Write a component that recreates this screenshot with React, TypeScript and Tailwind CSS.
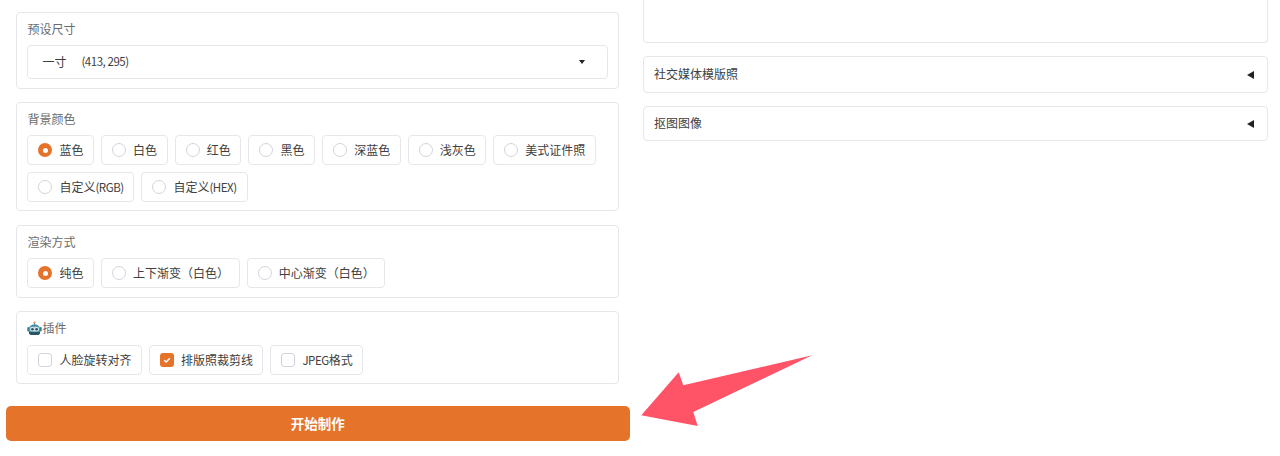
import React from "react";

function Robot() {
  return (
    <svg width="15" height="15" viewBox="0 0 15 15" className="shrink-0">
      <circle cx="7.5" cy="1.6" r="1.2" fill="#e8a33d" />
      <rect x="7" y="2" width="1" height="2" fill="#8a97a0" />
      <rect x="0.3" y="6" width="2" height="4.5" rx="1" fill="#2f7f97" />
      <rect x="12.7" y="6" width="2" height="4.5" rx="1" fill="#2f7f97" />
      <path d="M2 8c0-3 2.400-4.600 5.500-4.600S13 5 13 8v3.500c0 1.500-1 2.500-2.500 2.500h-6C3 14 2 13 2 11.500z" fill="#3d8ca6" />
      <path d="M2 11h11v.8c0 1.300-1 2.200-2.500 2.200h-6C3 14 2 13.100 2 11.800z" fill="#2b5566" />
      <rect x="2.800" y="5.800" width="9.400" height="4.800" rx="2" fill="#c9dfe6" />
      <circle cx="5.400" cy="8.200" r="1.300" fill="#35515f" />
      <circle cx="9.600" cy="8.200" r="1.300" fill="#35515f" />
    </svg>
  );
}

function Lat({ children }: { children: React.ReactNode }) {
  return <span className="text-[11.5px] tracking-[-0.45px]">{children}</span>;
}

function Radio({ label, checked, w }: { label: React.ReactNode; checked?: boolean; w: string }) {
  return (
    <div className={`h-[30px] ${w} flex items-center pl-[10px] gap-[7px] bg-white border border-[#e5e7eb] rounded-[4px] text-[12px] text-[#404040] whitespace-nowrap`}>
      {checked ? (
        <span className="w-[14px] h-[14px] rounded-full bg-[#e6732a] flex items-center justify-center shrink-0">
          <span className="w-[5px] h-[5px] rounded-full bg-white" />
        </span>
      ) : (
        <span className="w-[14px] h-[14px] rounded-full border border-[#d1d5db] shrink-0" />
      )}
      <span>{label}</span>
    </div>
  );
}

function Check({ label, checked, w }: { label: React.ReactNode; checked?: boolean; w: string }) {
  return (
    <div className={`h-[30px] ${w} flex items-center pl-[10px] gap-[7px] bg-white border border-[#e5e7eb] rounded-[4px] text-[12px] text-[#404040] whitespace-nowrap`}>
      {checked ? (
        <span className="w-[14px] h-[14px] rounded-[3px] bg-[#e6732a] flex items-center justify-center shrink-0">
          <svg width="10" height="10" viewBox="0 0 10 10" fill="none">
            <path d="M2.200 5.200 4.200 7 7.800 3.200" stroke="#fff" strokeWidth="1.500" />
          </svg>
        </span>
      ) : (
        <span className="w-[14px] h-[14px] rounded-[3px] border border-[#d1d5db] shrink-0" />
      )}
      <span>{label}</span>
    </div>
  );
}

function Panel({ label, h, gap, children }: { label: React.ReactNode; h: string; gap: string; children: React.ReactNode }) {
  return (
    <div className={`${h} ml-[10px] mr-[11px] border border-[#e5e7eb] rounded-[4px] bg-white pl-[10.4px] pr-[10px] pt-[7px]`}>
      <div className="h-[18px] leading-[18px] flex items-center text-[12px] text-[#6b6b6b]">{label}</div>
      <div className={gap}>{children}</div>
    </div>
  );
}

function Accordion({ label, h }: { label: string; h: string }) {
  return (
    <div className={`${h} border border-[#e5e7eb] rounded-[4px] bg-white flex items-center justify-between pl-[10px] pr-[13px] text-[12px] text-[#404040]`}>
      <span className="pb-[2px]">{label}</span>
      <span className="w-0 h-0 border-y-[4px] border-y-transparent border-r-[7px] border-r-[#222222]" />
    </div>
  );
}

export default function App() {
  return (
    <div className="relative h-[456px] w-[1280px] overflow-hidden bg-white flex font-['Noto_Sans_CJK_SC','Noto_Sans',sans-serif]">
      <div className="w-[623.5px] ml-[6px] pt-[12px] shrink-0">
        <Panel label="预设尺寸" h="h-[77px]" gap="mt-[7px]">
          <div className="h-[34px] border border-[#e5e7eb] rounded-[4px] flex items-center justify-between pl-[14px] pr-[22px] text-[#404040]">
            <span className="flex items-center text-[12px]">
              <span className="w-[39px]">一寸</span>
              <Lat>(413, 295)</Lat>
            </span>
            <span className="w-0 h-0 border-x-[3.5px] border-x-transparent border-t-[4px] border-t-[#222222]" />
          </div>
        </Panel>
        <div className="h-[13px]" />
        <Panel label="背景颜色" h="h-[109px]" gap="mt-[7px]">
          <div className="flex flex-wrap gap-[7px]">
            <Radio label="蓝色" checked w="w-[66.7px]" />
            <Radio label="白色" w="w-[66.7px]" />
            <Radio label="红色" w="w-[66.7px]" />
            <Radio label="黑色" w="w-[66.7px]" />
            <Radio label="深蓝色" w="w-[78.5px]" />
            <Radio label="浅灰色" w="w-[78.5px]" />
            <Radio label="美式证件照" w="w-[103px]" />
            <Radio label={<>自定义<Lat>(RGB)</Lat></>} w="w-[107px]" />
            <Radio label={<>自定义<Lat>(HEX)</Lat></>} w="w-[107px]" />
          </div>
        </Panel>
        <div className="h-[14px]" />
        <Panel label="渲染方式" h="h-[73px]" gap="mt-[7px]">
          <div className="flex gap-[7px]">
            <Radio label="纯色" checked w="w-[66.7px]" />
            <Radio label="上下渐变（白色）" w="w-[138.7px]" />
            <Radio label="中心渐变（白色）" w="w-[138.7px]" />
          </div>
        </Panel>
        <div className="h-[13px]" />
        <Panel label={<><Robot />插件</>} h="h-[73px]" gap="mt-[8px]">
          <div className="flex gap-[7px]">
            <Check label="人脸旋转对齐" w="w-[114.5px]" />
            <Check label="排版照裁剪线" checked w="w-[114.5px]" />
            <Check label={<><Lat>JPEG</Lat>格式</>} w="w-[93px]" />
          </div>
        </Panel>
        <button className="mt-[22px] w-full h-[35px] rounded-[5px] bg-[#e6732a] text-white text-[13.5px] font-bold flex items-center justify-center">
          开始制作
        </button>
      </div>
      <div className="w-[625px] ml-[13.5px] shrink-0">
        <div className="h-[43px] border border-t-0 border-[#e5e7eb] rounded-b-[4px]" />
        <div className="h-[13px]" />
        <Accordion label="社交媒体模版照" h="h-[37px]" />
        <div className="h-[13px]" />
        <Accordion label="抠图图像" h="h-[35px]" />
      </div>
      <svg className="absolute left-0 top-0 pointer-events-none" width="1280" height="456">
        <polygon points="641.300,415.300 678.700,372.300 683.300,385.300 812.300,355.300 693.300,412 697.700,426" fill="#ff5468" />
      </svg>
    </div>
  );
}
